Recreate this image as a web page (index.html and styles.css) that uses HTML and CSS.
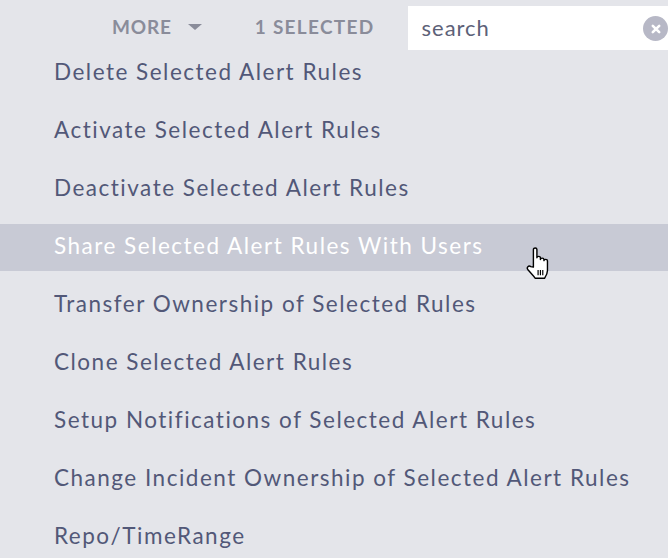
FILE: index.html
```html
<!DOCTYPE html>
<html>
<head>
<meta charset="utf-8">
<link rel="stylesheet" href="styles.css">
</head>
<body>
<div class="page">
  <header class="toolbar">
    <div class="more">MORE <span class="caret"></span></div>
    <div class="selected">1 SELECTED</div>
    <div class="search">
      <span class="search-text">search</span>
      <span class="clear"><svg width="12" height="12" viewBox="0 0 12 12"><path d="M2.8 2.8 L9.2 9.2 M9.2 2.8 L2.8 9.2" stroke="#fff" stroke-width="2.6" stroke-linecap="round"/></svg></span>
    </div>
  </header>
  <ul class="menu">
    <li class="item">Delete Selected Alert Rules</li>
    <li class="item">Activate Selected Alert Rules</li>
    <li class="item">Deactivate Selected Alert Rules</li>
    <li class="item active">Share Selected Alert Rules With Users
      <svg class="cursor" width="25" height="34" viewBox="1 0 21 29"><path d="M8,18 L8,3 C8,1.3 11,1.3 11,3 L11,10 C11,8.5 14,8.5 14,10 L14,11.5 C14,10 17,10 17,11.5 L17,12.5 C17,11 20,11 20,12.5 L20,21 C20,24 18.5,26 17.5,27.5 L9.5,27.5 C8.5,25.5 5.5,23 3.2,20 C2,18.3 3.8,16.2 5.8,17.6 Z" fill="#fff" stroke="#000" stroke-width="1.2" stroke-linejoin="round"/><path d="M12 20.5 V25 M14 20.5 V25 M16 20.5 V25" stroke="#000" stroke-width="1"/></svg>
    </li>
    <li class="item">Transfer Ownership of Selected Rules</li>
    <li class="item">Clone Selected Alert Rules</li>
    <li class="item">Setup Notifications of Selected Alert Rules</li>
    <li class="item">Change Incident Ownership of Selected Alert Rules</li>
    <li class="item">Repo/TimeRange</li>
  </ul>
</div>
</body>
</html>
```
FILE: styles.css
```css
html, body {
  margin: 0;
  padding: 0;
  background: #e4e5ea;
}
body {
  font-family: Lato, "Open Sans", sans-serif;
  width: 668px;
  height: 558px;
  overflow: hidden;
}
.page {
  display: flex;
  flex-direction: column;
}
.toolbar {
  display: flex;
  align-items: center;
  height: 44px;
  margin-top: 6px;
  padding-left: 112px;
  overflow: hidden;
}
.more, .selected {
  font-size: 19px;
  font-weight: 700;
  color: #8a8c9a;
  letter-spacing: 0.8px;
  display: flex;
  align-items: center;
  white-space: nowrap;
  flex-shrink: 0;
  padding-bottom: 3px;
}
.caret {
  display: inline-block;
  width: 0;
  height: 0;
  border-left: 7px solid transparent;
  border-right: 7px solid transparent;
  border-top: 6px solid #8a8c9a;
  margin-left: 16px;
  margin-top: 1px;
}
.selected {
  margin-left: 53px;
  letter-spacing: 1.3px;
}
.search {
  margin-left: 34px;
  background: #fff;
  height: 44px;
  width: 272px;
  display: flex;
  align-items: center;
  flex-shrink: 0;
  position: relative;
}
.search-text {
  font-size: 22px;
  letter-spacing: 1px;
  color: #5d6178;
  margin-left: 13px;
  padding-bottom: 2px;
}
.clear {
  position: absolute;
  left: 235px;
  top: 10px;
  width: 25px;
  height: 25px;
  border-radius: 50%;
  background: #b7b8c6;
  display: flex;
  align-items: center;
  justify-content: center;
}
.menu {
  list-style: none;
  margin: 0;
  padding: 0;
  display: flex;
  flex-direction: column;
  gap: 11px;
}
.item {
  height: 47px;
  box-sizing: border-box;
  padding-bottom: 5px;
  display: flex;
  align-items: center;
  padding-left: 54px;
  font-size: 22.5px;
  letter-spacing: 1.5px;
  color: #525878;
  position: relative;
}
.item.active {
  background: #c8cad5;
  color: #fff;
}
.cursor {
  position: absolute;
  left: 525px;
  top: 22px;
}
```
